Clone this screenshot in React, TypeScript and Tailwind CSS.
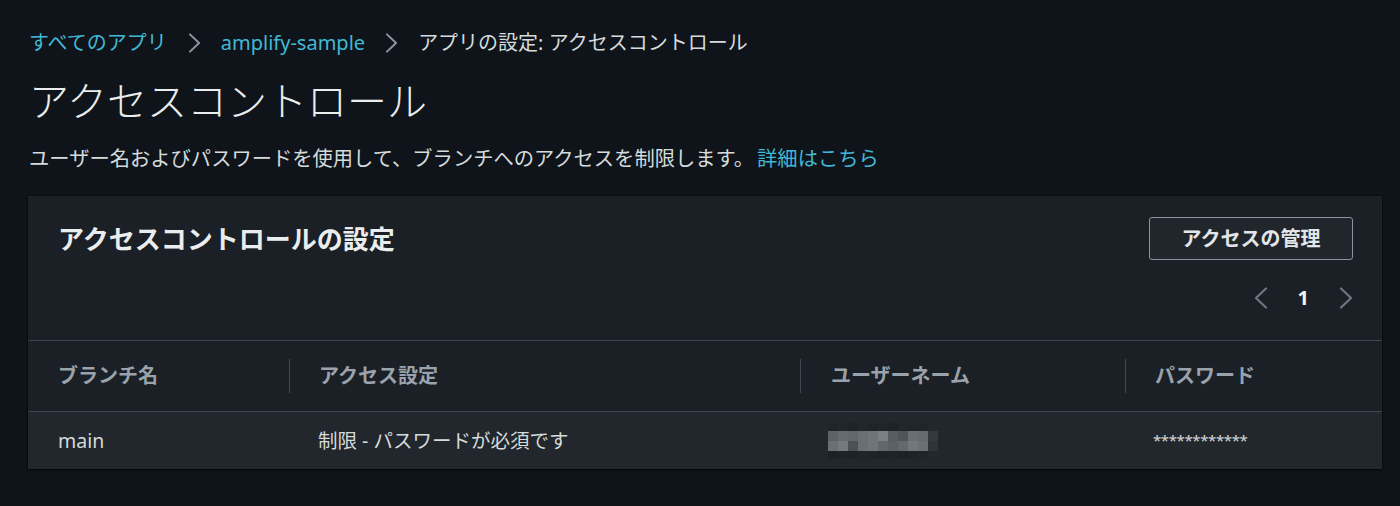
import React from "react";

const Chevron = ({ dir = "right", className = "" }: { dir?: "left" | "right"; className?: string }) => (
  <svg viewBox="0 0 14 22" className={className} fill="none" stroke="currentColor" strokeWidth={2.2} strokeLinecap="round" strokeLinejoin="round">
    {dir === "right" ? <path d="M2 1.5 L12 11 L2 20.5" /> : <path d="M12 1.5 L2 11 L12 20.5" />}
  </svg>
);

const blurRows: { h: string; cols: string[] }[] = [
  { h: "h-[8px]", cols: ["#1f232a", "#20242b", "#1e2229", "#22262d", "#1f232a", "#20242b", "#1e2229", "#22262d", "#20242b", "#1f232a", "#23272e"] },
  { h: "h-[10px]", cols: ["#5d6268", "#666b70", "#62676d", "#6a6f74", "#6f7479", "#7b8085", "#585d64", "#50555c", "#6a6f74", "#666b70", "#34383f"] },
  { h: "h-[10px]", cols: ["#6a6f74", "#757a7f", "#4c5158", "#6a6f74", "#70757a", "#63686e", "#5c6167", "#64696f", "#72777c", "#6b7075", "#2f333a"] },
  { h: "h-[8px]", cols: ["#1c2027", "#1e2229", "#1d2128", "#20242b", "#1e2229", "#1c2027", "#1f232a", "#1d2128", "#1e2229", "#20242b", "#23272e"] },
];

const Blurred = () => (
  <div className="flex flex-col">
    {blurRows.map((r, i) => (
      <div key={i} className="flex">
        {r.cols.map((c, j) => (
          <div key={j} className={`${r.h} w-[10px]`} style={{ backgroundColor: c }} />
        ))}
      </div>
    ))}
  </div>
);

export default function App() {
  return (
    <div
      className="min-h-[506px] bg-[#0f141a] pl-[28px] pr-[18px] pt-[30px] text-[#d5dbdb]"
      style={{ fontFamily: '"Noto Sans", "Noto Sans CJK JP", sans-serif' }}
    >
      {/* breadcrumb */}
      <div className="flex h-[26px] items-center pl-[1px] text-[20px] leading-none">
        <span className="text-[#42b8d5]">すべてのアプリ</span>
        <Chevron className="ml-[21px] mr-[20px] h-[20px] w-[13px] text-[#8d949c]" />
        <span className="text-[#42b8d5]">amplify-sample</span>
        <Chevron className="ml-[20px] mr-[20px] h-[20px] w-[13px] text-[#8d949c]" />
        <span className="text-[#d5dbdb]">アプリの設定: アクセスコントロール</span>
      </div>

      {/* title */}
      <h1 className="mt-[25px] pl-[1px] text-[40px] font-light leading-none text-[#eaeded]">アクセスコントロール</h1>

      {/* description */}
      <p className="mt-[27px] pl-[1px] text-[20.3px] leading-none text-[#d5dbdb]">
        <span>ユーザー名およびパスワードを使用して、ブランチへのアクセスを制限します。</span><span className="ml-[3px] text-[#42b8d5]">詳細はこちら</span>
      </p>

      {/* card */}
      <div className="mt-[28px] bg-[#1b1f26] shadow-[0_1px_2px_rgba(0,0,0,0.6),0_0_0_1px_rgba(0,0,0,0.25)]">
        <div className="px-[29px] pt-[21px] pb-[31px]">
          <div className="flex items-center justify-between">
            <h2 className="pl-[1px] text-[26px] font-bold leading-none text-[#eaeded]">アクセスコントロールの設定</h2>
            <button className="flex h-[43px] w-[204px] items-center justify-center rounded-[3px] border border-[#8d949c] bg-[#21252c] text-[20px] font-bold leading-none text-[#e3e6e8]">
              アクセスの管理
            </button>
          </div>
          <div className="mt-[27px] flex items-center justify-end gap-[30px]">
            <Chevron dir="left" className="h-[22px] w-[14px] text-[#6f767e]" />
            <span className="text-[20px] font-bold leading-none text-[#f2f3f3]">1</span>
            <Chevron dir="right" className="h-[22px] w-[14px] text-[#6f767e]" />
          </div>
        </div>

        {/* table header */}
        <div className="flex h-[71px] items-center border-t border-[#3e444d] text-[20px] font-bold leading-none text-[#9aa2ab]">
          <div className="flex w-[261px] items-center pl-[30px]">ブランチ名</div>
          <div className="flex h-[34px] w-[511px] items-center border-l border-[#414750] pl-[29px]">アクセス設定</div>
          <div className="flex h-[34px] w-[325px] items-center border-l border-[#414750] pl-[30px]">ユーザーネーム</div>
          <div className="flex h-[34px] flex-1 items-center border-l border-[#414750] pl-[29px]">パスワード</div>
        </div>

        {/* row */}
        <div className="flex h-[58px] items-center border-t border-[#3e444d] bg-[#22262d] text-[19.5px] leading-none text-[#d5dbdb]">
          <div className="w-[261px] pl-[30px]">main</div>
          <div className="w-[512px] pl-[29px]">制限 - パスワードが必須です</div>
          <div className="w-[326px] pl-[27px]">
            <Blurred />
          </div>
          <div className="flex-1 pl-[26px] text-[15px] tracking-[-0.4px]">************</div>
        </div>
      </div>
    </div>
  );
}
